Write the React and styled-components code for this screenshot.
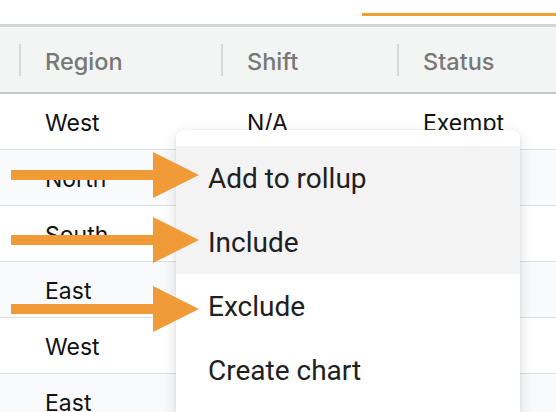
import React from "react";
import styled, { createGlobalStyle } from "styled-components";

const Global = createGlobalStyle`
  html, body { margin: 0; padding: 0; background: #ffffff; overflow: hidden; }
  body { font-family: Inter, "Noto Sans", sans-serif; }
`;

const Page = styled.div`
  position: relative;
  width: 556px;
  height: 412px;
  overflow: hidden;
  background: #ffffff;
`;

const TabBar = styled.div`
  height: 24px;
  display: flex;
  justify-content: flex-end;
`;

const TabIndicator = styled.div`
  width: 194px;
  height: 3px;
  margin-top: 13px;
  background: #f0a032;
`;

const Table = styled.div`
  display: flex;
  flex-direction: column;
`;

const HeaderRow = styled.div`
  display: grid;
  grid-template-columns: 19px 202px 176px 1fr;
  height: 65px;
  background: #f3f4f4;
  border-top: 3px solid #d4d6d8;
  border-bottom: 2px solid #c5c7c9;
`;

const HeaderCell = styled.div`
  position: relative;
  display: flex;
  align-items: center;
  padding: 4px 0 0 26px;
  font-size: 23.5px;
  font-weight: 500;
  color: #777777;
  white-space: nowrap;
  &::before {
    content: "";
    display: ${(p) => (p.$sep ? "block" : "none")};
    position: absolute;
    left: 0;
    top: 17px;
    width: 2px;
    height: 32px;
    background: #d6d8da;
  }
`;

const Row = styled.div`
  display: grid;
  grid-template-columns: 19px 202px 176px 1fr;
  height: 55px;
  background: ${(p) => (p.$alt ? "#f9fafc" : "#ffffff")};
  border-bottom: 1px solid #dcdee0;
`;

const Cell = styled.div`
  display: flex;
  align-items: center;
  padding: 2px 0 0 26px;
  font-size: 23px;
  color: #111111;
  white-space: nowrap;
`;

const Menu = styled.div`
  position: absolute;
  left: 176px;
  top: 130px;
  width: 344px;
  padding: 16px 0;
  background: #ffffff;
  border-radius: 7px;
  box-shadow: 0 4px 14px rgba(0, 0, 0, 0.14), 0 0 3px rgba(0, 0, 0, 0.05);
  display: flex;
  flex-direction: column;
`;

const MenuItem = styled.div`
  height: 64px;
  display: flex;
  align-items: center;
  padding-left: 32px;
  font-family: Roboto, "Noto Sans", sans-serif;
  font-size: 28px;
  color: #202020;
  background: ${(p) => (p.$active ? "#f3f3f3" : "transparent")};
`;

const ArrowWrap = styled.div`
  position: absolute;
  left: 11px;
  width: 188px;
  height: 46px;
  line-height: 0;
`;

const Arrow = ({ top }) => (
  <ArrowWrap style={{ top }}>
    <svg width="188" height="46" viewBox="0 0 188 46">
      <rect x="0" y="18" width="144" height="10" fill="#f19a38" />
      <polygon points="142,0 188,23 142,46" fill="#f19a38" />
    </svg>
  </ArrowWrap>
);

const rows = [
  ["West", "N/A", "Exempt"],
  ["North", "Day", "Active"],
  ["South", "Night", "Active"],
  ["East", "Day", "Exempt"],
  ["West", "Night", "Active"],
  ["East", "Day", "Active"],
];

const items = [
  { label: "Add to rollup", active: true },
  { label: "Include", active: true },
  { label: "Exclude", active: false },
  { label: "Create chart", active: false },
];

export default function App() {
  return (
    <Page>
      <Global />
      <TabBar>
        <TabIndicator />
      </TabBar>
      <Table>
        <HeaderRow>
          <HeaderCell />
          <HeaderCell $sep>Region</HeaderCell>
          <HeaderCell $sep>Shift</HeaderCell>
          <HeaderCell $sep>Status</HeaderCell>
        </HeaderRow>
        {rows.map((r, i) => (
          <Row key={i} $alt={i % 2 === 1}>
            <Cell />
            <Cell>{r[0]}</Cell>
            <Cell>{r[1]}</Cell>
            <Cell>{r[2]}</Cell>
          </Row>
        ))}
      </Table>
      <Menu>
        {items.map((it) => (
          <MenuItem key={it.label} $active={it.active}>
            {it.label}
          </MenuItem>
        ))}
      </Menu>
      <Arrow top={152} />
      <Arrow top={217} />
      <Arrow top={286} />
    </Page>
  );
}
